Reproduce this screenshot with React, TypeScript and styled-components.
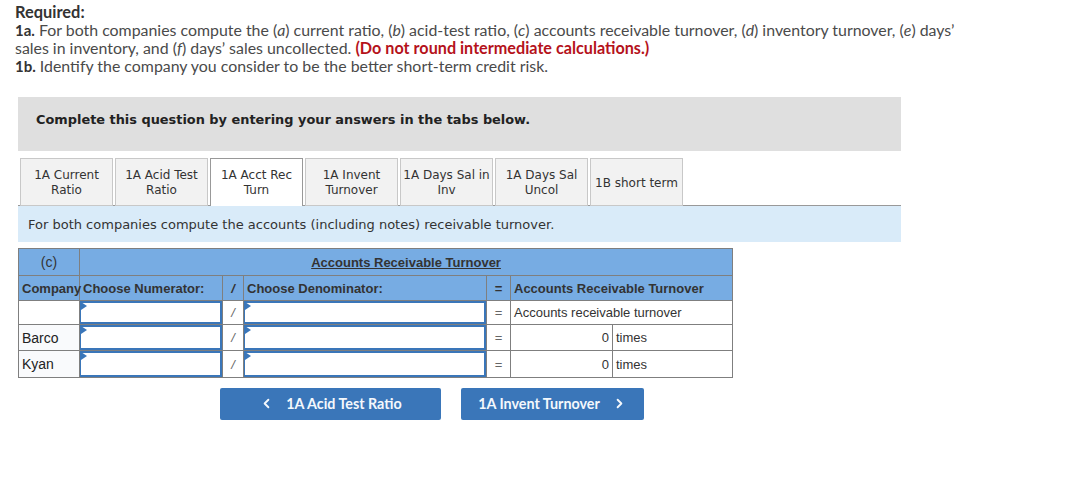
import { createGlobalStyle, styled } from "styled-components";
import { ChevronLeft, ChevronRight } from "lucide-react";

const GlobalStyle = createGlobalStyle`
  html, body {
    margin: 0;
    padding: 0;
    background: #fff;
  }
`;

const Page = styled.div`
  width: 1081px;
  height: 495px;
  overflow: hidden;
  box-sizing: border-box;
  padding: 3px 0 0 18px;
  color: #333;
`;

const Required = styled.div`
  margin-left: -3px;
  width: 1000px;
  font: 400 15.9px/18px "Lato", sans-serif;
  color: #4a4a4a;
  strong {
    font-weight: 700;
    font-size: 15px;
    color: #333;
  }
`;

const RequiredLabel = styled.strong`
  && {
    font-size: 16.4px;
  }
`;

const Warning = styled.strong`
  && {
    color: #b5121b;
    font-size: 16.2px;
  }
`;

const Prompt = styled.div`
  margin-top: 22px;
  width: 883px;
  height: 54px;
  box-sizing: border-box;
  padding: 0 0 9px 18px;
  display: flex;
  align-items: center;
  background: #dfdfdf;
  font: 700 12.9px "DejaVu Sans", sans-serif;
  color: #222;
`;

const Tabs = styled.div`
  display: flex;
  gap: 2px;
  margin: 7px 0 0 2px;
`;

const Tab = styled.div<{ $active?: boolean; $single?: boolean }>`
  width: 93px;
  height: 48px;
  box-sizing: border-box;
  padding-top: ${(p) => (p.$active ? 0 : p.$single ? 2 : 1)}px;
  display: flex;
  align-items: center;
  justify-content: center;
  text-align: center;
  font: 400 12px/15px "DejaVu Sans", sans-serif;
  color: #333;
  background: ${(p) => (p.$active ? "#fff" : "#f2f2f2")};
  border: 1px solid ${(p) => (p.$active ? "#999" : "#c8c8c8")};
  border-bottom: ${(p) => (p.$active ? "none" : "1px solid #c8c8c8")};
  position: relative;
  z-index: ${(p) => (p.$active ? 1 : 0)};
`;

const Info = styled.div`
  width: 883px;
  height: 37px;
  margin-top: -1px;
  box-sizing: border-box;
  padding-left: 10px;
  display: flex;
  align-items: center;
  background: #d9ebf9;
  border-top: 1px solid #999;
  font: 400 13px "DejaVu Sans", sans-serif;
  color: #333;
`;

const Sheet = styled.table`
  margin-top: 6px;
  width: 714px;
  table-layout: fixed;
  border-collapse: collapse;
  font: 400 13px "Liberation Sans", sans-serif;
  color: #333;
`;

const HeadRow = styled.tr<{ $height: number }>`
  height: ${(p) => p.$height}px;
  background: #77ace3;
`;

const Row = styled.tr<{ $height: number }>`
  height: ${(p) => p.$height}px;
  background: #fff;
`;

const Cell = styled.td<{ $align?: string; $bold?: boolean; $muted?: boolean }>`
  border: 1px solid #7f7f7f;
  padding: 0 3px;
  white-space: nowrap;
  text-align: ${(p) => p.$align || "left"};
  font-weight: ${(p) => (p.$bold ? 700 : 400)};
  color: ${(p) => (p.$muted ? "#666" : "inherit")};
`;

const CompanyCell = styled(Cell)`
  padding: 0 0 0 3px;
`;

const NameCell = styled(Cell)`
  background: #f9fafc;
  font-size: 14px;
  color: #222;
`;

const PartCell = styled(Cell)`
  font-size: 14px;
`;

const Title = styled.span`
  text-decoration: underline;
`;

const Slash = styled.i`
  font-style: italic;
`;

const InputCell = styled.td`
  border: 1px solid #7f7f7f;
  padding: 0;
  position: relative;
  height: 1px;
  &::before {
    content: "";
    position: absolute;
    left: 1px;
    top: 1px;
    border-left: 6px solid #3a76b9;
    border-top: 4px solid transparent;
    border-bottom: 4px solid transparent;
  }
`;

const Field = styled.input`
  display: block;
  width: 100%;
  height: 100%;
  box-sizing: border-box;
  margin: 0;
  padding: 0 4px;
  border: 2px solid #3a76b9;
  border-left-width: 1px;
  outline: none;
  background: #fff;
  font: inherit;
`;

const Nav = styled.div`
  display: flex;
  gap: 20px;
  margin: 10px 0 0 202px;
`;

const NavButton = styled.button<{ $width: number }>`
  width: ${(p) => p.$width}px;
  height: 32px;
  display: flex;
  align-items: center;
  justify-content: center;
  gap: 12px;
  padding: 0 0 1px;
  border: none;
  border-radius: 2px;
  background: #3a76b9;
  color: #f4f8fc;
  font: 700 14.3px "Lato", sans-serif;
`;

const columns = [61, 143, 21, 243, 24, 102, 120];

const companies = [
  { name: "Barco", height: 26 },
  { name: "Kyan", height: 27 },
];

const InputPair = () => (
  <>
    <InputCell>
      <Field />
    </InputCell>
    <Cell $align="center" $muted>
      <Slash>/</Slash>
    </Cell>
    <InputCell>
      <Field />
    </InputCell>
    <Cell $align="center" $muted>
      =
    </Cell>
  </>
);

export default function App() {
  return (
    <Page>
      <GlobalStyle />
      <Required>
        <RequiredLabel>Required:</RequiredLabel>
        <br />
        <strong>1a.</strong> For both companies compute the (<em>a</em>) current ratio, (<em>b</em>) acid-test
        ratio, (<em>c</em>) accounts receivable turnover, (<em>d</em>) inventory turnover, (<em>e</em>) days’
        <br />
        sales in inventory, and (<em>f</em>) days’ sales uncollected.{" "}
        <Warning>(Do not round intermediate calculations.)</Warning>
        <br />
        <strong>1b.</strong> Identify the company you consider to be the better short-term credit risk.
      </Required>
      <Prompt>Complete this question by entering your answers in the tabs below.</Prompt>
      <Tabs>
        <Tab>1A Current Ratio</Tab>
        <Tab>1A Acid Test Ratio</Tab>
        <Tab $active>1A Acct Rec Turn</Tab>
        <Tab>1A Invent Turnover</Tab>
        <Tab>1A Days Sal in Inv</Tab>
        <Tab>1A Days Sal Uncol</Tab>
        <Tab $single>1B short term</Tab>
      </Tabs>
      <Info>For both companies compute the accounts (including notes) receivable turnover.</Info>
      <Sheet>
        <colgroup>
          {columns.map((w, i) => (
            <col key={i} width={w} />
          ))}
        </colgroup>
        <tbody>
          <HeadRow $height={27}>
            <PartCell $align="center">(c)</PartCell>
            <Cell colSpan={6} $align="center" $bold>
              <Title>Accounts Receivable Turnover</Title>
            </Cell>
          </HeadRow>
          <HeadRow $height={25}>
            <CompanyCell $bold>Company</CompanyCell>
            <Cell $bold>Choose Numerator:</Cell>
            <Cell $align="center" $bold>
              <Slash>/</Slash>
            </Cell>
            <Cell $bold>Choose Denominator:</Cell>
            <Cell $align="center" $bold>
              =
            </Cell>
            <Cell colSpan={2} $bold>
              Accounts Receivable Turnover
            </Cell>
          </HeadRow>
          <Row $height={24}>
            <Cell />
            <InputPair />
            <Cell colSpan={2}>Accounts receivable turnover</Cell>
          </Row>
          {companies.map((c) => (
            <Row key={c.name} $height={c.height}>
              <NameCell>{c.name}</NameCell>
              <InputPair />
              <Cell $align="right">0</Cell>
              <Cell>times</Cell>
            </Row>
          ))}
        </tbody>
      </Sheet>
      <Nav>
        <NavButton $width={221}>
          <ChevronLeft size={15} strokeWidth={3} />
          1A Acid Test Ratio
        </NavButton>
        <NavButton $width={183}>
          1A Invent Turnover
          <ChevronRight size={15} strokeWidth={3} />
        </NavButton>
      </Nav>
    </Page>
  );
}
